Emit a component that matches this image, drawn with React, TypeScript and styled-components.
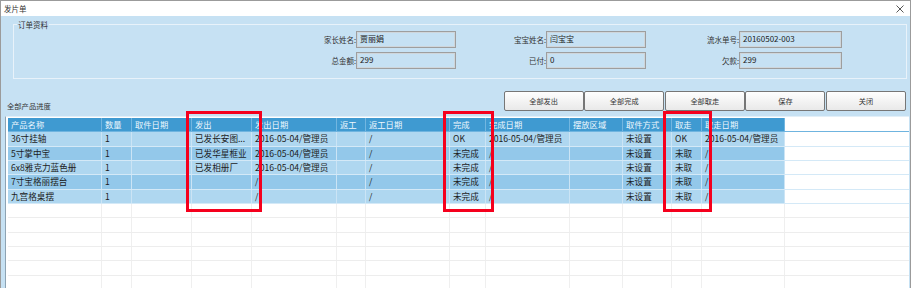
import styled, { createGlobalStyle } from 'styled-components';

const GlobalStyle = createGlobalStyle`
  html, body {
    margin: 0;
    padding: 0;
    background: #fff;
  }
  body {
    font-family: "Noto Sans CJK SC", "Noto Sans", sans-serif;
  }
`;

const COLS = '94px 30px 60px 60px 85px 29px 84px 36px 84px 53px 49px 30px 83px 1fr';

const Window = styled.div`
  position: relative;
  width: 911px;
  height: 288px;
  box-sizing: border-box;
  border: 1px solid #9b9b9b;
  border-bottom: none;
  display: flex;
  flex-direction: column;
  overflow: hidden;
  background: #c6e1f3;
  color: #222;
`;

const TitleBar = styled.div`
  height: 15px;
  flex: none;
  background: #fff;
  display: flex;
  align-items: center;
  justify-content: space-between;
  padding: 0 6px 0 3px;
  font-size: 7.5px;
  color: #333;
`;

const Body = styled.div`
  flex: 1;
  min-height: 0;
  display: flex;
  flex-direction: column;
`;

const GroupBox = styled.div`
  flex: none;
  height: 55px;
  box-sizing: border-box;
  margin: 8px 3px 0 12px;
  border: 1px solid #e8f2fa;
`;

const Legend = styled.div`
  width: fit-content;
  margin: -5px 0 0 3px;
  padding: 0 1px;
  background: #c6e1f3;
  font-size: 7.5px;
  line-height: 9px;
  color: #333;
`;

const FieldGrid = styled.div`
  display: grid;
  grid-template-columns: 342px 100px 90px 100px 93px 103px;
  grid-auto-rows: 17px;
  row-gap: 4px;
  margin-top: 2px;
`;

const FieldLabel = styled.div`
  display: flex;
  align-items: center;
  justify-content: flex-end;
  font-size: 7.5px;
  color: #333;
`;

const FieldBox = styled.div`
  box-sizing: border-box;
  border: 1px solid #9e9e9e;
  box-shadow: inset 0 0 0 1px #cfd6db;
  padding: 2px 3px;
  font-size: 8px;
  line-height: 10px;
  color: #222;
`;

const ActionRow = styled.div`
  flex: none;
  height: 20px;
  margin-top: 12px;
  padding: 0 4px 0 6px;
  display: flex;
  align-items: flex-end;
  justify-content: space-between;
`;

const SectionTitle = styled.div`
  font-size: 7.3px;
  line-height: 10px;
  color: #333;
`;

const ButtonBar = styled.div`
  display: flex;
  gap: 0.6px;
  height: 100%;
`;

const ActionButton = styled.button`
  width: 80px;
  height: 100%;
  padding: 0;
  box-sizing: border-box;
  border: 1px solid #767676;
  border-radius: 2px;
  background: linear-gradient(#fefefe, #e9e9e9);
  font-family: inherit;
  font-size: 7.2px;
  color: #333;
`;

const Grid = styled.div`
  flex: 1;
  min-height: 0;
  overflow: hidden;
  margin: 5px 1px 0 4px;
  border-left: 1px solid #8da3b3;
  border-top: 1px solid #e2eff8;
  padding: 1px 0 0 2px;
  background: #fff;
`;

const Row = styled.div<{ $kind: 'head' | 'light' | 'dark' | 'empty' }>`
  display: grid;
  grid-template-columns: ${COLS};
  height: 14.33px;
  box-sizing: border-box;
  border-bottom: 1px solid
    ${(p) => (p.$kind === 'empty' ? '#ededed' : p.$kind === 'head' ? '#6fb4df' : '#d4e9f7')};
  font-size: ${(p) => (p.$kind === 'head' ? '8.3px' : '8.6px')};
  line-height: 13px;
  color: ${(p) => (p.$kind === 'head' ? '#eef7fd' : '#1c1c1c')};

  & > span {
    border-right: 1px solid
      ${(p) => (p.$kind === 'empty' ? '#efefef' : p.$kind === 'head' ? '#72b6e0' : '#cbe4f5')};
  }

  & > span:not(:last-child) {
    background: ${(p) =>
      p.$kind === 'head'
        ? '#3f9ad1'
        : p.$kind === 'light'
          ? '#afd7f0'
          : p.$kind === 'dark'
            ? '#93c8ea'
            : '#fff'};
  }

  & > span:last-child {
    border-right: none;
  }
`;

const Cell = styled.span`
  box-sizing: border-box;
  padding-left: 3px;
  white-space: nowrap;
  overflow: hidden;
`;

const Mark = styled.div<{ $left: number; $width: number }>`
  position: absolute;
  top: 110px;
  left: ${(p) => p.$left}px;
  width: ${(p) => p.$width}px;
  height: 101px;
  box-sizing: border-box;
  border: 3px solid #f5001d;
  pointer-events: none;
`;

const headers = [
  '产品名称', '数量', '取件日期', '发出', '发出日期', '返工', '返工日期',
  '完成', '完成日期', '摆放区域', '取件方式', '取走', '取走日期',
];

const STAMP = '2016-05-04/管理员';

// one array per product, same order as headers
const products = [
  ['36寸挂轴', '1', '', '已发长安图...', STAMP, '', '/', 'OK', STAMP, '', '未设置', 'OK', STAMP],
  ['5寸掌中宝', '1', '', '已发华星框业', STAMP, '', '/', '未完成', '/', '', '未设置', '未取', '/'],
  ['6x8雅克力蓝色册', '1', '', '已发相册厂', STAMP, '', '/', '未完成', '/', '', '未设置', '未取', '/'],
  ['7寸宝格丽摆台', '1', '', '', '/', '', '/', '未完成', '/', '', '未设置', '未取', '/'],
  ['九宫格桌摆', '1', '', '', '/', '', '/', '未完成', '/', '', '未设置', '未取', '/'],
];

const fields = [
  ['家长姓名:', '贾丽娟', '宝宝姓名:', '闫宝宝', '流水单号:', '20160502-003'],
  ['总金额:', '299', '已付:', '0', '欠款:', '299'],
];

const buttons = ['全部发出', '全部完成', '全部取走', '保存', '关闭'];

const CloseIcon = () => (
  <svg width="8" height="8" viewBox="0 0 8 8">
    <path d="M0.5 0.5 L7.5 7.5 M7.5 0.5 L0.5 7.5" stroke="#444" strokeWidth="0.9" fill="none" />
  </svg>
);

const App = () => {
  return (
    <>
      <GlobalStyle />
      <Window>
        <TitleBar>
          <span>发片单</span>
          <CloseIcon />
        </TitleBar>
        <Body>
          <GroupBox>
            <Legend>订单资料</Legend>
            <FieldGrid>
              {fields.map((row) =>
                row.map((text, i) =>
                  i % 2 === 0 ? (
                    <FieldLabel key={text}>{text}</FieldLabel>
                  ) : (
                    <FieldBox key={row[i - 1] + text}>{text}</FieldBox>
                  ),
                ),
              )}
            </FieldGrid>
          </GroupBox>

          <ActionRow>
            <SectionTitle>全部产品进度</SectionTitle>
            <ButtonBar>
              {buttons.map((b) => (
                <ActionButton key={b}>{b}</ActionButton>
              ))}
            </ButtonBar>
          </ActionRow>

          <Grid>
            <Row $kind="head">
              {headers.map((h) => (
                <Cell key={h}>{h}</Cell>
              ))}
              <Cell />
            </Row>
            {products.map((p, r) => (
              <Row key={p[0]} $kind={r % 2 === 0 ? 'light' : 'dark'}>
                {p.map((v, c) => (
                  <Cell key={c}>{v}</Cell>
                ))}
                <Cell />
              </Row>
            ))}
            {Array.from({ length: 7 }, (_, r) => (
              <Row key={'e' + r} $kind="empty">
                {headers.map((h) => (
                  <Cell key={h} />
                ))}
                <Cell />
              </Row>
            ))}
          </Grid>
        </Body>

        <Mark $left={185} $width={76} />
        <Mark $left={442} $width={51} />
        <Mark $left={662} $width={49} />
      </Window>
    </>
  );
};

export default App;
